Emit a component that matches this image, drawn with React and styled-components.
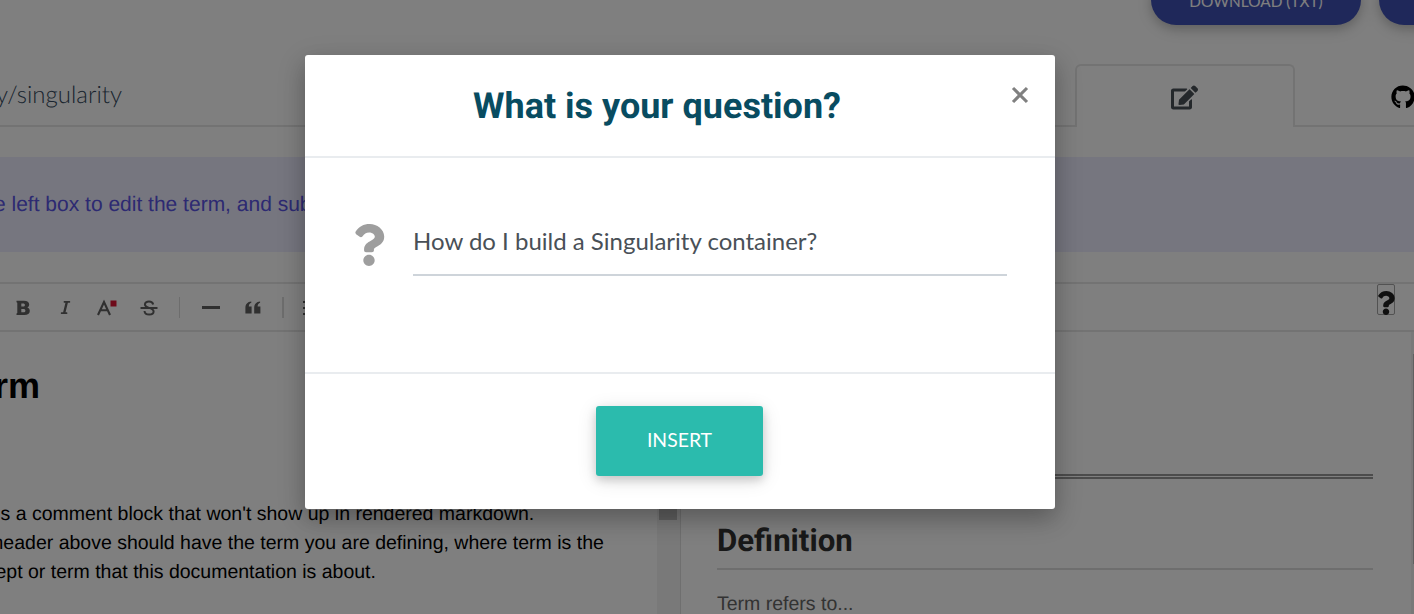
import React from "react";
import styled, { createGlobalStyle } from "styled-components";
import { FaEdit, FaGithub, FaItalic, FaQuestion } from "react-icons/fa";

const GlobalStyle = createGlobalStyle`
  *, *::before, *::after { box-sizing: border-box; }
  body { margin: 0; overflow: hidden; background: #fff; font-family: "Liberation Sans", Arial, sans-serif; text-rendering: geometricPrecision; }
  svg { display: block; flex: none; }
`;

const Page = styled.div`
  position: relative;
  width: 1414px;
  height: 614px;
  overflow: hidden;
  display: flex;
  flex-direction: column;
  background: #fff;
`;

const Actions = styled.header`
  height: 64px;
  flex: none;
  display: flex;
  gap: 18px;
  padding-left: 1151px;
`;

const PillButton = styled.button`
  width: 210px;
  height: 50px;
  margin-top: -25px;
  flex: none;
  border: 0;
  border-radius: 25px;
  background: #3f51b5;
  color: #fff;
  font: 400 15.4px/48px Lato, sans-serif;
  padding: 2px 0 0;
  box-shadow: 0 4px 10px rgba(0, 0, 0, 0.16), 0 4px 20px rgba(0, 0, 0, 0.12);
`;

const TabBar = styled.nav`
  height: 63px;
  flex: none;
  display: flex;
`;

const Crumb = styled.div`
  width: 1077px;
  flex: none;
  border-bottom: 2px solid #e6e6e6;
  display: flex;
  white-space: nowrap;
  color: #33485c;
  font: 300 24px/62px Lato, sans-serif;
`;

const Tab = styled.div`
  width: 220px;
  margin-left: -2px;
  flex: none;
  display: flex;
  justify-content: center;
  padding: 18px 2px 0 0;
  border: 2px solid #e6e6e6;
  border-bottom: 0;
  border-radius: 6px 6px 0 0;
  color: #495057;
`;

const TabRest = styled.div`
  flex: 1;
  padding: 21px 0 0 96px;
  border-bottom: 2px solid #e6e6e6;
  overflow: hidden;
  color: #000;
`;

const Notice = styled.div`
  height: 95px;
  margin: 30px 0;
  flex: none;
  background: #ededff;
  color: #5a54e4;
  font-size: 21px;
  line-height: 96px;
  white-space: nowrap;
`;

const Shifted = styled.span`
  display: block;
  margin-left: ${(p) => p.$by}px;
`;

const Toolbar = styled.div`
  height: 50px;
  flex: none;
  display: flex;
  justify-content: space-between;
  border: solid #e6e6e6;
  border-width: 2px 0;
  color: #606060;
`;

const Tools = styled.div`
  display: flex;
  align-items: center;
  padding: 1px 0 0 15px;
`;

const Tool = styled.span`
  width: ${(p) => p.$w}px;
  height: 20px;
  flex: none;
  display: flex;
  align-items: center;
`;

const Divider = styled.i`
  width: ${(p) => p.$w}px;
  height: 21px;
  margin-right: ${(p) => p.$after}px;
  background: #dadada;
`;

const HelpButton = styled.button`
  width: 18px;
  height: 31px;
  margin-right: 19px;
  padding: 6px 0 0;
  border: 1px solid #a4a4a4;
  border-radius: 2px;
  background: transparent;
  color: #212121;
  display: flex;
  justify-content: center;
`;

const Panes = styled.main`
  flex: 1;
  display: flex;
  min-height: 0;
`;

const Source = styled.section`
  width: 657px;
  flex: none;
  overflow: hidden;
  white-space: nowrap;
  color: #000;
`;

const SourceHeading = styled.h1`
  margin: 0;
  padding-top: 32px;
  height: 168px;
  font-size: 36px;
  line-height: 44px;
`;

const SourceLine = styled.p`
  margin: 0 0 0 ${(p) => p.$by}px;
  font-size: 19.5px;
  line-height: 29px;
`;

const Scrollbar = styled.div`
  width: ${(p) => p.$w}px;
  flex: none;
  padding: ${(p) => p.$top}px 0 0 2px;
  background: #f2f2f2;
`;

const Thumb = styled.div`
  width: 18px;
  height: ${(p) => p.$h}px;
  background: #c1c1c1;
`;

const Preview = styled.section`
  flex: 1;
  padding: 142px 38px 0 36px;
  border-left: 1px solid #dedede;
`;

const DoubleRule = styled.div`
  height: 5px;
  border: solid #999;
  border-width: 2px 0;
`;

const Section = styled.h2`
  margin: 37px 0 0;
  height: 54px;
  border-bottom: 2px solid #dcdcdc;
  color: #333;
  font: 700 31.2px/49px Roboto, sans-serif;
`;

const Body = styled.p`
  margin: 20px 0 0;
  color: #666;
  font-size: 19.5px;
  line-height: 28px;
`;

const Backdrop = styled.div`
  position: absolute;
  inset: 0;
  display: flex;
  justify-content: center;
  align-items: flex-start;
  padding: 55px 54px 0 0;
  background: rgba(0, 0, 0, 0.5);
`;

const Dialog = styled.div`
  width: 750px;
  height: 454px;
  border-radius: 3px;
  background: #fff;
  display: flex;
  flex-direction: column;
  box-shadow: 0 10px 22px rgba(0, 0, 0, 0.18), 0 8px 30px rgba(0, 0, 0, 0.15);
`;

const DialogHeader = styled.div`
  height: 103px;
  flex: none;
  display: flex;
  border-bottom: 2px solid #e9ecef;
`;

const Title = styled.h3`
  flex: 1;
  margin: 0;
  padding-left: 168px;
  color: #084c61;
  font: 700 36px/103px Roboto, sans-serif;
  white-space: nowrap;
`;

const CloseButton = styled.button`
  margin: 31px 26px 0 0;
  width: 18px;
  height: 18px;
  padding: 0;
  border: 0;
  background: transparent;
`;

const DialogBody = styled.div`
  height: 214px;
  flex: none;
  display: flex;
  gap: 23.5px;
  padding: 66px 48px 0 42.5px;
  color: #9e9e9e;
`;

const Input = styled.input`
  flex: 1;
  min-width: 0;
  height: 68px;
  margin-top: -16px;
  padding: 0 0 2px;
  border: 0;
  border-bottom: 2px solid #ced4da;
  outline: 0;
  background: transparent;
  color: #495057;
  font: 400 24px/64px Lato, sans-serif;
`;

const DialogFooter = styled.div`
  flex: 1;
  display: flex;
  justify-content: center;
  padding: 32px 1px 0 0;
  border-top: 2px solid #e9ecef;
`;

const InsertButton = styled.button`
  width: 167px;
  height: 70px;
  padding: 0 0 3px;
  border: 0;
  border-radius: 3px;
  background: #2bbbad;
  color: #fff;
  font: 400 19.4px/67px Lato, sans-serif;
  box-shadow: 0 4px 10px rgba(0, 0, 0, 0.16), 0 4px 20px rgba(0, 0, 0, 0.12);
`;

const TextColorIcon = () => (
  <svg width="20" height="20" viewBox="0 0 20 20">
    <path d="M1 17L7 4L13 17M3.4 12.2H10.6" fill="none" stroke="currentColor" strokeWidth="2.1" />
    <path d="M13.5 2.500h6v6h-6z" fill="#dc1432" />
  </svg>
);

const StrikeIcon = () => (
  <svg width="18" height="20" viewBox="0 0 18 20" fill="none" stroke="currentColor" strokeWidth="2">
    <path d="M13.2 6.4C12.7 4.4 11.3 3.6 9 3.6C6.600 3.600 4.900 4.700 4.900 6.600C4.900 8.200 6 9 9 9.900C12.200 10.800 13.600 11.800 13.600 13.500C13.600 15.400 11.800 16.600 9.200 16.600C6.400 16.600 4.700 15.400 4.500 13" />
    <path d="M0.500 10H17.500" />
  </svg>
);

const BoldIcon = () => (
  <svg width="15" height="16" viewBox="0 0 15 16" fill="currentColor" fillRule="evenodd">
    <path d="M1.500 .700H9C12.300 .700 14.200 2.200 14.200 4.600C14.200 6.100 13.400 7.100 12.300 7.600C13.900 8.100 14.800 9.300 14.800 10.900C14.800 13.600 12.700 15 9.300 15H1.500V13.500L2.300 13V2.700L1.500 2.200ZM6.300 3.500V6.500H8.100C9.200 6.500 9.900 6 9.900 5C9.900 4 9.200 3.500 8.100 3.500ZM6.300 9.100V12.300H8.300C9.600 12.300 10.400 11.700 10.400 10.700C10.400 9.700 9.600 9.100 8.300 9.100Z" />
  </svg>
);

const QuoteIcon = () => (
  <svg width="16" height="14" viewBox="0 0 16 14" fill="currentColor">
    <path d="M6.300 1.800C4.800 2.300 3.900 3.500 3.800 5.500H6.600V12.500H0.400V6.800C0.400 3 2.500 .7 6.300.4Z" />
    <path d="M15.100 1.800C13.600 2.300 12.700 3.500 12.600 5.500H15.400V12.500H9.200V6.800C9.200 3 11.300 .7 15.100.4Z" />
  </svg>
);

const ListIcon = () => (
  <svg width="18" height="16" viewBox="0 0 18 16" fill="currentColor">
    <path d="M0 1h2v2H0zM0 7h2v2H0zM0 13h2v2H0zM5 1h13v2H5zM5 7h13v2H5zM5 13h13v2H5z" />
  </svg>
);

export default function App() {
  return (
    <>
      <GlobalStyle />
      <Page>
        <Actions>
          <PillButton>DOWNLOAD (TXT)</PillButton>
          <PillButton />
        </Actions>
        <TabBar>
          <Crumb>
            <Shifted $by={-4}>y/singularity</Shifted>
          </Crumb>
          <Tab>
            <FaEdit size={27} />
          </Tab>
          <TabRest>
            <FaGithub size={24} />
          </TabRest>
        </TabBar>
        <Notice>
          <Shifted $by={-6}>e left box to edit the term, and sub</Shifted>
        </Notice>
        <Toolbar>
          <Tools>
            <Tool $w={43}><BoldIcon /></Tool>
            <Tool $w={39}><FaItalic size={15} /></Tool>
            <Tool $w={43}><TextColorIcon /></Tool>
            <Tool $w={39}><StrikeIcon /></Tool>
            <Divider $w={1} $after={22} />
            <Tool $w={43}>
              <svg width="18" height="3"><path d="M0 0h18v3H0z" fill="currentColor" /></svg>
            </Tool>
            <Tool $w={37}><QuoteIcon /></Tool>
            <Divider $w={2} $after={19} />
            <Tool $w={18}><ListIcon /></Tool>
          </Tools>
          <HelpButton>
            <FaQuestion size={24} />
          </HelpButton>
        </Toolbar>
        <Panes>
          <Source>
            <SourceHeading>
              <Shifted $by={-6}>rm</Shifted>
            </SourceHeading>
            <SourceLine $by={0.5}>s a comment block that won't show up in rendered markdown.</SourceLine>
            <SourceLine $by={-7.5}>header above should have the term you are defining, where term is the</SourceLine>
            <SourceLine $by={-4.5}>ept or term that this documentation is about.</SourceLine>
          </Source>
          <Scrollbar $w={23} $top={0}>
            <Thumb $h={188} />
          </Scrollbar>
          <Preview>
            <DoubleRule />
            <Section>Definition</Section>
            <Body>Term refers to...</Body>
          </Preview>
          <Scrollbar $w={3} $top={22}>
            <Thumb $h={210} />
          </Scrollbar>
        </Panes>
        <Backdrop>
          <Dialog>
            <DialogHeader>
              <Title>What is your question?</Title>
              <CloseButton aria-label="Close">
                <svg width="18" height="18" viewBox="0 0 18 18">
                  <path d="M2 2L16 16M16 2L2 16" stroke="#808080" strokeWidth="3.100" />
                </svg>
              </CloseButton>
            </DialogHeader>
            <DialogBody>
              <FaQuestion size={42} />
              <Input defaultValue="How do I build a Singularity container?" />
            </DialogBody>
            <DialogFooter>
              <InsertButton>INSERT</InsertButton>
            </DialogFooter>
          </Dialog>
        </Backdrop>
      </Page>
    </>
  );
}
